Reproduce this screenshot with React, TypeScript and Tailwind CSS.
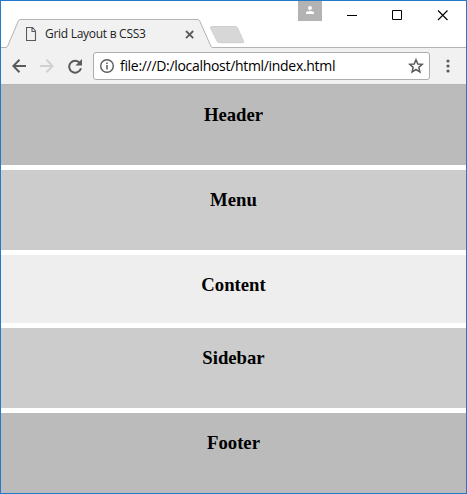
import React from 'react';

const sections = [
  { title: 'Header', style: 'h-[80px] bg-[#bbbbbb]' },
  { title: 'Menu', style: 'h-[80px] bg-[#cccccc]' },
  { title: 'Content', style: 'h-[68px] bg-[#eeeeee]' },
  { title: 'Sidebar', style: 'h-[80px] bg-[#cccccc]' },
  { title: 'Footer', style: 'h-[80px] bg-[#bbbbbb]' },
];

function TitleBar() {
  return (
    <div className="relative flex h-[47px] shrink-0 bg-white">
      <svg className="absolute left-0 top-0" width="465" height="47" viewBox="1 1 465 47">
        <path d="M1 48V47.500H6L7.500 46.500L18.500 20.500L20 19.500H198L199.500 20.500L211 46.500L212.500 47.500H466V48Z" fill="#f1f1f1" />
        <path d="M1 47.500H6L7.500 46.500L18.500 20.500L20 19.500H198L199.500 20.500L211 46.500L212.500 47.500H466" fill="none" stroke="#b3b3b3" />
        <path d="M212 26.500H235.500Q237 26.500 237.700 28L243.500 41Q244.300 42.700 242.500 42.700H219.500Q217.700 42.700 217 41L210.700 28.300Q210 26.500 212 26.500Z" fill="#d7d7d7" stroke="#c8c8c8" strokeWidth=".8" />
      </svg>
      <div className="relative flex h-[47px] w-[212px] items-start pl-[25px] pt-[26px]">
        <svg className="shrink-0" width="11" height="14" viewBox="0 0 11 14" fill="none" stroke="#5a5a5a" strokeWidth="1.100">
          <path d="M.5.500H6.500L9.500 4V13.500H.5ZM6 .5V4.500H9.500" />
        </svg>
        <span className="ml-[8px] mt-[-2px] w-[101px] whitespace-nowrap font-['Open_Sans','Noto_Sans',sans-serif] text-[12px] leading-[18px] tracking-[-0.28px] text-[#222]">Grid Layout в CSS3</span>
        <svg className="ml-[39px] mt-[3px] shrink-0" width="9" height="9" viewBox="0 0 9 9" stroke="#5a5a5a" strokeWidth="1.8">
          <path d="M1 1 8.200 8.200M8.200 1 1 8.200" />
        </svg>
      </div>
      <div className="relative ml-[85px] flex h-[20px] w-[24px] justify-center bg-[#b3b3b3] pt-[5px]">
        <svg width="8" height="8" viewBox="0 0 8 8" fill="white">
          <circle cx="4" cy="2" r="2" /><path d="M0 8V6.800Q0 5 4 5T8 6.800V8Z" />
        </svg>
      </div>
      <svg className="relative ml-[25px] mt-[9px]" width="103" height="11" viewBox="0 0 103 11" fill="none" stroke="black">
        <path d="M0 5.500H10M45.500.5H54.500V9.500H45.500Z" />
        <path d="M91 .5 100.500 10M100.500.5 91 10" strokeWidth="1.1" />
      </svg>
    </div>
  );
}

function Toolbar() {
  return (
    <div className="flex h-[36px] shrink-0 items-center bg-[#f1f1f1] pl-[11px]">
      <svg className="shrink-0" width="14" height="14" viewBox="0 0 14 14" fill="none" stroke="#5a5a5a" strokeWidth="2">
        <path d="M14 7H1.500M7.500.8 1.300 7 7.500 13.200" />
      </svg>
      <svg className="ml-[14px] shrink-0" width="14" height="14" viewBox="0 0 14 14" fill="none" stroke="#d1d1d1" strokeWidth="2">
        <path d="M0 7H12.500M6.500.8 12.700 7 6.500 13.200" />
      </svg>
      <svg className="ml-[14px] shrink-0" width="15" height="15" viewBox="0 0 15 15" fill="none">
        <path d="M12.200 4.300A6 6 0 1 0 13 9.200" stroke="#5a5a5a" strokeWidth="2" />
        <path d="M14 0V6.500H7.500Z" fill="#5a5a5a" />
      </svg>
      <div className="ml-[10px] flex h-[28px] w-[337px] shrink-0 items-center rounded-[3px] border border-[#adadad] bg-white pl-[6px]">
        <svg width="14" height="14" viewBox="0 0 14 14" fill="none" stroke="#5a5a5a">
          <circle cx="7" cy="7" r="6.300" strokeWidth="1.400" />
          <path d="M7 6V10.500M7 3.400V4.900" strokeWidth="1.500" />
        </svg>
        <span className="ml-[6px] w-[216px] whitespace-nowrap font-['Open_Sans','Noto_Sans',sans-serif] text-[14px] leading-[20px] tracking-[-0.31px] text-black">file:///D:/localhost/html/index.html</span>
        <svg className="ml-[72px] shrink-0" width="16" height="16" viewBox="0 0 16 16" fill="none" stroke="#5a5a5a" strokeWidth="1.500">
          <path d="M8 1.700 9.800 6 14.300 6.350 10.850 9.350 11.900 13.900 8 11.500 4.100 13.900 5.150 9.350 1.700 6.350 6.200 6Z" />
        </svg>
      </div>
      <svg className="ml-[16px]" width="4" height="14" viewBox="0 0 4 14" fill="#5a5a5a">
        <circle cx="2" cy="2" r="1.600" /><circle cx="2" cy="7" r="1.600" /><circle cx="2" cy="12" r="1.600" />
      </svg>
    </div>
  );
}

export default function App() {
  return (
    <div className="flex h-[494px] w-[467px] flex-col overflow-hidden border border-[#227ac9] bg-white">
      <TitleBar />
      <Toolbar />
      <main className="flex flex-col gap-[5px] border-t border-[#b6b6b6]">
        {sections.map(({ title, style }) => (
          <section key={title} className={`${style} pt-[19px] text-center`}>
            <h3 className="font-['Liberation_Serif',serif] text-[18.72px] font-bold leading-[22px] text-black">{title}</h3>
          </section>
        ))}
      </main>
    </div>
  );
}
